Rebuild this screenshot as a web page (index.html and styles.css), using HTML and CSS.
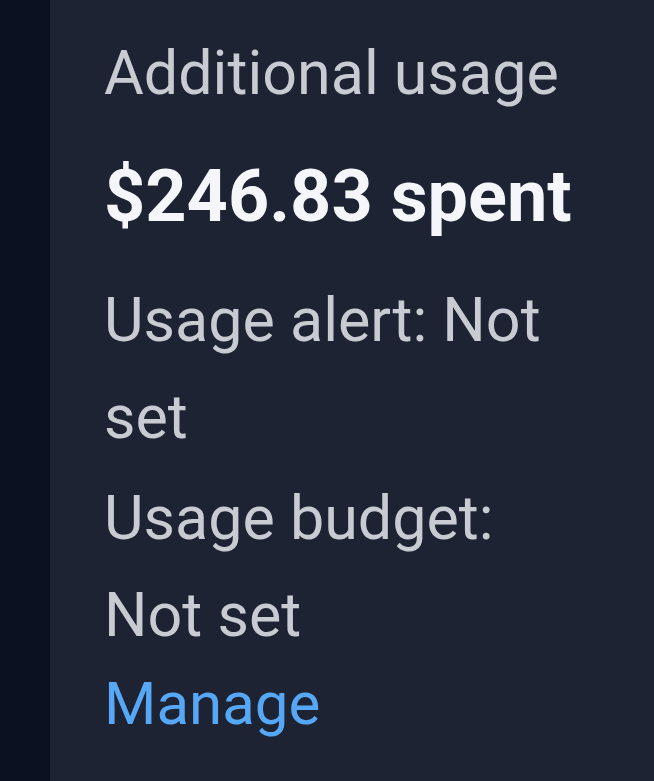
FILE: index.html
```html
<!DOCTYPE html>
<html><head><link rel="stylesheet" href="styles.css"></head>
<body>
<div class="layout">
  <aside class="rail"></aside>
  <section class="panel">
    <div class="label">Additional usage</div>
    <div class="amount">$246.83 spent</div>
    <p class="info">Usage alert: Not set</p>
    <p class="info info-2">Usage budget: Not set</p>
    <a class="link" href="#">Manage</a>
  </section>
</div>
</body></html>
```
FILE: styles.css
```css
html,body{margin:0;height:100%}
body{background:#1d2333;font-family:Roboto,"Liberation Sans",sans-serif}
.layout{display:flex;height:100%}
.rail{width:50px;flex:none;background:#0b1120}
.panel{flex:1;display:flex;flex-direction:column;align-items:flex-start;padding:25px 54px 0 54px;min-width:0}
.label{font-size:61px;line-height:97px;color:#c8cbd2}
.amount{font-size:72px;line-height:100px;font-weight:700;color:#f4f6fa;margin-top:25px}
.info{margin:25px 0 0;font-size:61px;line-height:97px;color:#c8cbd2}
.info-2{margin-top:4px}
.link{font-size:60px;line-height:80px;color:#56a8f6;text-decoration:none}
```
